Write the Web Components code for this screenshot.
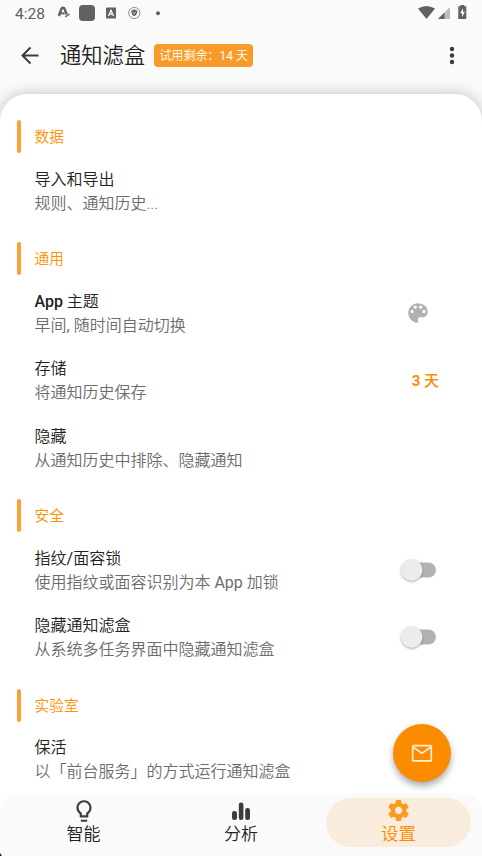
<!DOCTYPE html>
<html lang="zh-CN"><head><meta charset="utf-8"><title>通知滤盒</title>
<style>
html,body{margin:0;height:100%;background:#fafafa;overflow:hidden}
body{font-family:Roboto,"Noto Sans CJK SC",sans-serif;color:#212121}
</style></head><body>
<filter-app></filter-app>
<script>
const define=(name,html)=>customElements.define(name,class extends HTMLElement{
  constructor(){super();this.attachShadow({mode:'open'}).innerHTML=html;}
});

define('status-bar',`<style>
:host{display:flex;height:26px;align-items:center;color:#616161;font-size:16px;box-sizing:border-box;padding:0 14px 0 15px}
.time{width:43px;line-height:26px;padding-top:2px;font-size:15.500px}
svg{display:block}.gap{flex:1}
</style>
<span class="time">4:28</span>
<svg width="104" height="20" viewBox="58 3 104 20">
 <path d="M58.8 16 61.2 9.3Q61.7 7.8 63 7.8Q64.2 7.8 64.7 9.2L66.7 14.6" fill="none" stroke="#616161" stroke-width="2.5"/>
 <path d="M60.5 13.4h4" stroke="#616161" stroke-width="2"/><path d="M65.3 17 69.5 14" stroke="#616161" stroke-width="1.4"/>
 <rect x="79" y="5" width="16" height="16" rx="4" fill="#616161"/>
 <rect x="106" y="7.5" width="10" height="11" rx=".8" fill="#616161"/>
 <path d="M108.5 16 111 10.2 113.5 16M109.5 14.2h3" fill="none" stroke="#fff" stroke-width="1.2"/>
 <circle cx="134.3" cy="13" r="5.6" fill="#fafafa" stroke="#808080" stroke-width=".9"/>
 <path d="M131.2 10.500q1.800-.2 3.100-1.200 1.300 1 3.100 1.200 0 4.300-3.100 5.800-3.100-1.500-3.100-5.800z" fill="#616161"/>
 <path d="M132.700 11.500l1.600 2.300 1.600-2.300" stroke="#ddd" fill="none" stroke-width=".8"/>
 <circle cx="158" cy="13.200" r="2" fill="#616161"/>
</svg><span class="gap"></span>
<svg width="50" height="20" viewBox="418 3 50 20">
 <path d="M418 8.500Q426.500 3.500 435 8.500L426.500 19z" fill="#616161"/>
 <path d="M438 19 450 7V19z" fill="#bdbdbd"/><path d="M438 19 444.500 12.500V19z" fill="#616161"/>
 <path d="M460.300 5h4v1.300h2V19h-8V6.300h2z" fill="#616161"/><path d="M463 8.200 460 13.200h2V17l3-5.200h-2z" fill="#fafafa"/>
</svg>`);

define('app-bar',`<style>
:host{display:flex;height:58px;align-items:center;padding:0 18px 0 18px}
svg{display:block;flex:none}
h1{font-size:21.300px;font-weight:350;line-height:32px;margin:0 0 0 18px;padding-top:2px}
.badge{margin-left:9px;height:23px;line-height:25px;width:99px;border-radius:4px;background:#f99b28;color:#fff;font-size:12px;font-weight:350;text-align:center;white-space:nowrap}
.more{margin-left:auto}
</style>
<svg width="24" height="24" viewBox="0 0 24 24" fill="none" stroke="#3c3c3c" stroke-width="2"><path d="M20.500 12.500H5M12.500 4.500 4.500 12.500l8 8"/></svg>
<h1><slot></slot></h1><span class="badge"><slot name="badge"></slot></span>
<svg class="more" width="24" height="24" viewBox="0 0 24 24" fill="#3c3c3c"><circle cx="12" cy="6" r="2.200"/><circle cx="12" cy="12.500" r="2.200"/><circle cx="12" cy="19" r="2.200"/></svg>`);

define('settings-section',`<style>
:host{display:block}
header{display:flex;align-items:center;height:33px;padding:16.750px 0 4.750px 17px;font-size:14.700px;font-weight:350;line-height:33px;color:#fe9100}
i{width:4px;height:33px;border-radius:2px;background:#fc9f34;margin-right:13.500px}
header slot{display:block;padding-top:2px}
</style><header><i></i><slot name="title"></slot></header><slot></slot>`);

define('settings-row',`<style>
:host{display:flex;align-items:center;height:67.500px;padding:0 43px 0 34.500px;box-sizing:border-box}
div{flex:1;white-space:nowrap;font-size:16px;line-height:24px;font-weight:350}
.t{display:block}.s{color:#6c6c6c;display:block}
</style><div><span class="t"><slot name="title"></slot></span><span class="s"><slot></slot></span></div><slot name="end"></slot>`);

define('toggle-switch',`<style>:host{display:block;width:40px;height:30px;margin:-2px 2px 0 0}svg{display:block;overflow:visible}circle{filter:drop-shadow(0 1px 1px #0005)}</style>
<svg width="40" height="30" viewBox="0 0 40 30"><rect x="5" y="7.500" width="34" height="15" rx="7.500" fill="#b2b2b2"/><circle cx="14.700" cy="15" r="10.700" fill="#ececec"/></svg>`);

define('palette-icon',`<style>:host{display:block;margin:-2px 8px 0 0}svg{display:block}</style>
<svg width="26" height="26" viewBox="0 0 24 24"><path fill="#b1b1b1" d="M12 3c-4.970 0-9 4.030-9 9s4.030 9 9 9V17.500C12 16.500 12.800 16 13.610 16H16c2.760 0 5-2.240 5-5 0-4.420-4.030-8-9-8zm-5.500 9c-.83 0-1.500-.67-1.500-1.500S5.670 9 6.500 9 8 9.670 8 10.500 7.330 12 6.500 12zm3-4C8.670 8 8 7.330 8 6.500S8.670 5 9.500 5s1.500.67 1.500 1.500S10.330 8 9.500 8zm5 0c-.83 0-1.500-.67-1.500-1.500S13.670 5 14.500 5s1.500.67 1.500 1.500S15.330 8 14.500 8zm3 4c-.83 0-1.500-.67-1.500-1.500S16.670 9 17.500 9s1.500.67 1.500 1.500-.67 1.500-1.500 1.500z"/></svg>`);

define('value-label',`<style>:host{display:block;color:#fb8c00;font-weight:500;font-size:15px;line-height:24px}</style><slot></slot>`);

define('mail-fab',`<style>
:host{display:flex;width:58px;height:58px;border-radius:50%;background:#fb8c00;align-items:center;justify-content:center;box-shadow:0 4px 7px #0005}
</style><svg width="24" height="24" viewBox="0 0 24 24" fill="none" stroke="#ffecd5" stroke-width="1.700"><rect x="2.700" y="4.700" width="18.600" height="15.200" rx="1"/><path d="M3 6l9 6.300L21 6"/></svg>`);

define('nav-item',`<style>
:host{display:flex;flex-direction:column;align-items:center;width:145px;height:49px;border-radius:24.500px;font-size:17px;font-weight:350;line-height:22px;color:#212121}
:host([active]){background:#faecdc;color:#fb8c00;font-size:17.500px}
slot[name=icon]{display:block;height:25px}
</style><slot name="icon"></slot><span><slot></slot></span>`);

define('bottom-nav',`<style>
:host{display:flex;justify-content:space-between;box-sizing:border-box;height:62px;padding:4px 11px;background:#fafafa;border-radius:20px 20px 0 0;box-shadow:0 0 3px #00000008}
</style><slot></slot>`);

define('filter-app',`<style>
:host{display:flex;flex-direction:column;height:856px;width:482px;position:relative;overflow:hidden;background:#fafafa}
status-bar,app-bar{flex:none}
app-bar{margin-bottom:10px}
main{flex:1;min-height:0;background:#fff;border-radius:27px 27px 0 0;box-shadow:0 0 15px #0000003d;padding-top:9.250px;overflow:hidden;box-sizing:border-box}
.foot{background:#fff;position:relative}
mail-fab{position:absolute;left:393px;top:724px}
.corner{position:absolute;left:0;bottom:0;width:2px;height:3px;background:#222;clip-path:polygon(0 0,100% 100%,0 100%)}
svg{display:block}
.r{font-weight:400}.m{font-weight:500}.b{font-weight:700}
</style>
<status-bar></status-bar>
<app-bar>通知滤盒<span slot="badge">试用剩余：<span class="r">14</span> 天</span></app-bar>
<main>
<settings-section><span slot="title">数据</span>
 <settings-row><span slot="title">导入和导出</span>规则、通知历史...</settings-row></settings-section>
<settings-section><span slot="title">通用</span>
 <settings-row><span slot="title"><span class="m">App</span> 主题</span>早间<span class="r">, </span>随时间自动切换<palette-icon slot="end"></palette-icon></settings-row>
 <settings-row><span slot="title">存储</span>将通知历史保存<value-label slot="end"><span class="b">3</span> 天</value-label></settings-row>
 <settings-row><span slot="title">隐藏</span>从通知历史中排除、隐藏通知</settings-row></settings-section>
<settings-section><span slot="title">安全</span>
 <settings-row><span slot="title">指纹<span class="r">/</span>面容锁</span>使用指纹或面容识别为本 <span class="r">App</span> 加锁<toggle-switch slot="end"></toggle-switch></settings-row>
 <settings-row><span slot="title">隐藏通知滤盒</span>从系统多任务界面中隐藏通知滤盒<toggle-switch slot="end"></toggle-switch></settings-row></settings-section>
<settings-section><span slot="title">实验室</span>
 <settings-row><span slot="title">保活</span>以「前台服务」的方式运行通知滤盒</settings-row></settings-section>
</main>
<div class="foot"><bottom-nav>
<nav-item><svg slot="icon" width="26" height="26" viewBox="0 0 24 24" fill="#3c3c3c"><path d="M9 21c0 .55.45 1 1 1h4c.55 0 1-.45 1-1v-1H9v1zm3-19C8.140 2 5 5.140 5 9c0 2.380 1.190 4.470 3 5.740V17c0 .55.45 1 1 1h6c.55 0 1-.45 1-1v-2.260c1.810-1.270 3-3.360 3-5.740 0-3.860-3.140-7-7-7zm2.850 11.100-.85.600V16h-4v-2.300l-.85-.600A4.997 4.997 0 0 1 7 9c0-2.760 2.240-5 5-5s5 2.240 5 5c0 1.630-.8 3.160-2.150 4.100z"/></svg>智能</nav-item>
<nav-item><svg slot="icon" width="26" height="26" viewBox="0 0 26 26" fill="#3c3c3c"><rect x="4" y="13" width="5" height="9" rx="2.200"/><rect x="10.800" y="4.500" width="4.600" height="17.500" rx="2.200"/><rect x="17.200" y="10" width="4.800" height="12" rx="2.200"/></svg>分析</nav-item>
<nav-item active><svg slot="icon" width="25" height="25" viewBox="0 0 24 24" fill="#fb9a20"><path d="M19.430 12.980c.04-.32.07-.64.07-.98s-.03-.66-.07-.98l2.110-1.650c.19-.15.24-.42.12-.64l-2-3.460c-.12-.22-.39-.3-.61-.22l-2.490 1c-.52-.4-1.080-.73-1.690-.98l-.38-2.650A.49.49 0 0 0 14 2h-4c-.25 0-.46.18-.49.42l-.38 2.650c-.61.25-1.170.59-1.690.98l-2.490-1c-.23-.09-.49 0-.61.22l-2 3.460c-.13.22-.07.49.12.64l2.110 1.650c-.04.32-.07.65-.07.98s.03.66.07.98l-2.110 1.650c-.19.15-.24.42-.12.64l2 3.460c.12.22.39.3.61.22l2.490-1c.52.4 1.080.73 1.690.98l.38 2.650c.03.24.24.42.49.42h4c.25 0 .46-.18.49-.42l.38-2.650c.61-.25 1.170-.59 1.690-.98l2.490 1c.23.09.49 0 .61-.22l2-3.460c.12-.22.07-.49-.12-.64l-2.110-1.650zM12 15.500c-1.930 0-3.500-1.570-3.500-3.500s1.570-3.500 3.500-3.500 3.500 1.570 3.500 3.500-1.570 3.500-3.500 3.500z"/></svg>设置</nav-item>
</bottom-nav></div>
<mail-fab></mail-fab><span class="corner"></span>`);
</script></body></html>
